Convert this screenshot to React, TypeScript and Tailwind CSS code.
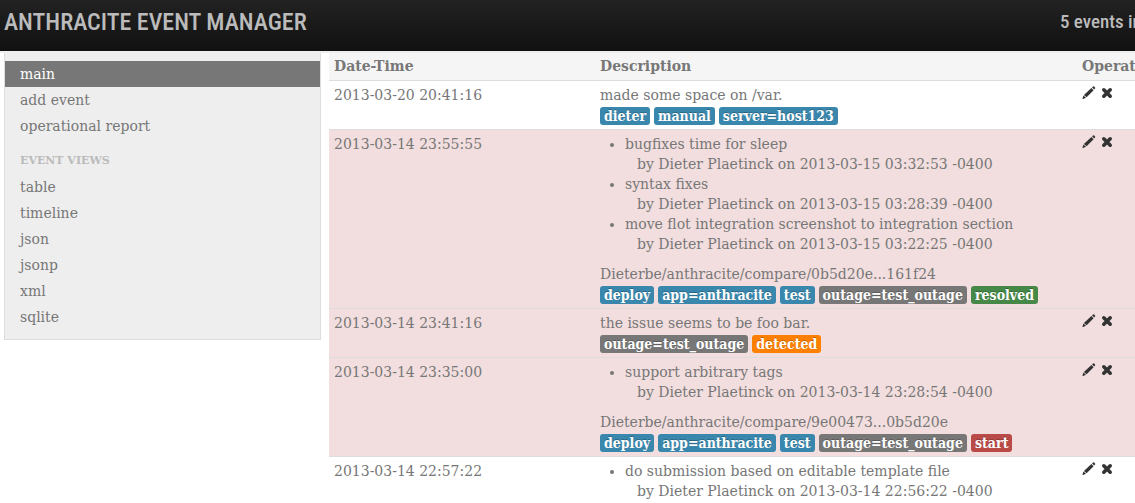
import type { ReactNode } from "react";

type Tone = "info" | "neutral" | "success" | "warning" | "danger";
type Tag = { text: string; tone: Tone };
type Commit = { title: string; by: string };
type EventRow = {
  time: string;
  alert?: boolean;
  commits?: Commit[];
  summary?: string;
  tags: Tag[];
};

const tones: Record<Tone, string> = {
  info: "bg-[#3a87ad]",
  neutral: "bg-[#777777]",
  success: "bg-[#468847]",
  warning: "bg-[#ff7f00]",
  danger: "bg-[#b94a48]",
};

const deployTags: Tag[] = [
  { text: "deploy", tone: "info" },
  { text: "app=anthracite", tone: "info" },
  { text: "test", tone: "info" },
  { text: "outage=test_outage", tone: "neutral" },
];

const events: EventRow[] = [
  {
    time: "2013-03-20 20:41:16",
    summary: "made some space on /var.",
    tags: [
      { text: "dieter", tone: "info" },
      { text: "manual", tone: "info" },
      { text: "server=host123", tone: "info" },
    ],
  },
  {
    time: "2013-03-14 23:55:55",
    alert: true,
    commits: [
      { title: "bugfixes time for sleep", by: "by Dieter Plaetinck on 2013-03-15 03:32:53 -0400" },
      { title: "syntax fixes", by: "by Dieter Plaetinck on 2013-03-15 03:28:39 -0400" },
      {
        title: "move flot integration screenshot to integration section",
        by: "by Dieter Plaetinck on 2013-03-15 03:22:25 -0400",
      },
    ],
    summary: "Dieterbe/anthracite/compare/0b5d20e...161f24",
    tags: [...deployTags, { text: "resolved", tone: "success" }],
  },
  {
    time: "2013-03-14 23:41:16",
    alert: true,
    summary: "the issue seems to be foo bar.",
    tags: [
      { text: "outage=test_outage", tone: "neutral" },
      { text: "detected", tone: "warning" },
    ],
  },
  {
    time: "2013-03-14 23:35:00",
    alert: true,
    commits: [{ title: "support arbitrary tags", by: "by Dieter Plaetinck on 2013-03-14 23:28:54 -0400" }],
    summary: "Dieterbe/anthracite/compare/9e00473...0b5d20e",
    tags: [...deployTags, { text: "start", tone: "danger" }],
  },
  {
    time: "2013-03-14 22:57:22",
    commits: [
      { title: "do submission based on editable template file", by: "by Dieter Plaetinck on 2013-03-14 22:56:22 -0400" },
    ],
    tags: [],
  },
];

function NavItem({ children, active = false }: { children: ReactNode; active?: boolean }) {
  return (
    <li>
      <a href="#" className={`block px-[15px] py-[3px] ${active ? "bg-[#777777] text-white" : ""}`}>
        {children}
      </a>
    </li>
  );
}

function PencilIcon() {
  return (
    <svg viewBox="0 0 14 14" className="size-3.5" fill="#333333" aria-hidden="true">
      <path d="M10.1 1.5 11 .6Q11.6 0 12.2.6L13 1.4Q13.6 2 13 2.6L12.1 3.5ZM9.4 2 11.6 4.2 4.6 11.2 1.9 8.9ZM1.4 9.5 4 11.8 1.1 13Q.4 13.2.5 12.5Z" />
    </svg>
  );
}

function RemoveIcon() {
  return (
    <svg viewBox="0 0 14 14" className="size-3.5" aria-hidden="true">
      <path d="M3.8 3.8 10.2 10.2M10.2 3.8 3.8 10.2" stroke="#333333" strokeWidth="3.6" strokeLinecap="round" />
    </svg>
  );
}

export default function App() {
  return (
    <div className="h-screen overflow-hidden bg-white font-['DejaVu_Serif',serif] text-sm leading-5 text-[#777777]">
      <header className="flex h-[51px] items-center justify-between bg-linear-to-b from-[#222222] to-[#111111] pb-[7px] pl-1 font-['Roboto_Condensed','Liberation_Sans_Narrow',sans-serif] font-medium text-[#bbbbbb]">
        <h1 className="text-2xl leading-8">ANTHRACITE EVENT MANAGER</h1>
        <p className="w-[75px] overflow-hidden text-[19px] leading-6 whitespace-nowrap">5 events in database</p>
      </header>
      <div className="h-0.5 bg-[#eeeeee]" />
      <div className="flex items-start gap-2 pl-1">
        <nav className="w-[317px] shrink-0 border border-t-0 border-[#dddddd] bg-[#eeeeee] pt-2 pb-[9px]">
          <ul>
            <NavItem active>main</NavItem>
            <NavItem>add event</NavItem>
            <NavItem>operational report</NavItem>
          </ul>
          <h2 className="mt-[9px] px-[15px] py-[3px] text-[11px] leading-5 font-bold text-[#bbbbbb]">EVENT VIEWS</h2>
          <ul>
            <NavItem>table</NavItem>
            <NavItem>timeline</NavItem>
            <NavItem>json</NavItem>
            <NavItem>jsonp</NavItem>
            <NavItem>xml</NavItem>
            <NavItem>sqlite</NavItem>
          </ul>
        </nav>
        <main className="min-w-0 grow overflow-hidden">
          <table className="w-full table-fixed text-left align-top">
            <thead className="bg-[#f5f5f5]">
              <tr>
                <th className="w-[266px] px-[5px] pt-[3px] pb-1">Date-Time</th>
                <th className="w-[482px] px-[5px] pt-[3px] pb-1">Description</th>
                <th className="px-[5px] pt-[3px] pb-1">Operations</th>
              </tr>
            </thead>
            <tbody>
              {events.map((event) => (
                <tr key={event.time} className={`border-t border-[#dddddd] align-top ${event.alert ? "bg-[#f2dede]" : ""}`}>
                  <td className="px-[5px] py-1">{event.time}</td>
                  <td className="px-[5px] py-1 whitespace-nowrap">
                    {event.commits && (
                      <ul className="mb-2.5 list-disc pl-[25px]">
                        {event.commits.map((commit) => (
                          <li key={commit.by}>
                            {commit.title}
                            <div className="pl-3">{commit.by}</div>
                          </li>
                        ))}
                      </ul>
                    )}
                    {event.summary && <p>{event.summary}</p>}
                    <div className="flex gap-1 pt-0.5 font-['DejaVu_Serif_Condensed','DejaVu_Serif',serif]">
                      {event.tags.map((tag) => (
                        <span
                          key={tag.text}
                          className={`rounded-[3px] px-1 py-0.5 leading-3.5 font-bold text-white text-shadow-[0_-1px_0_rgb(0_0_0_/_0.25)] ${tones[tag.tone]}`}
                        >
                          {tag.text}
                        </span>
                      ))}
                    </div>
                  </td>
                  <td className="px-[5px] py-1">
                    <div className="flex gap-1 pt-px">
                      <button type="button" aria-label="Edit event">
                        <PencilIcon />
                      </button>
                      <button type="button" aria-label="Delete event">
                        <RemoveIcon />
                      </button>
                    </div>
                  </td>
                </tr>
              ))}
            </tbody>
          </table>
        </main>
      </div>
    </div>
  );
}
